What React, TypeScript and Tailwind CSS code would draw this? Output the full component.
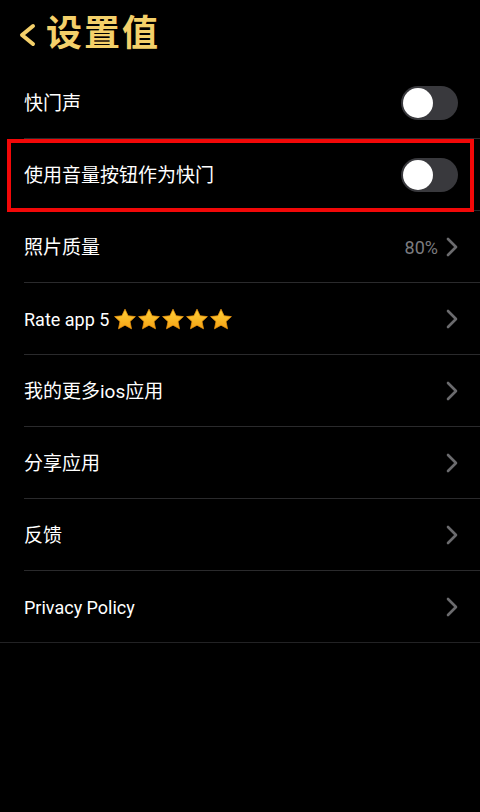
import React from "react";

const font = { fontFamily: 'Roboto, "Noto Sans CJK SC", sans-serif' };

function Chevron() {
  return (
    <svg width="12" height="20" viewBox="0 0 12 20" fill="none">
      <path d="M2 2 L10 10 L2 18" stroke="#6b6b6e" strokeWidth="2.6" strokeLinecap="round" strokeLinejoin="round" />
    </svg>
  );
}

function Toggle() {
  return (
    <div className="w-[57px] h-[34px] rounded-full bg-[#39393d] p-[2px] flex items-center">
      <div className="w-[30px] h-[30px] rounded-full bg-white" />
    </div>
  );
}

function Star() {
  return (
    <svg width="24" height="23" viewBox="0 0 24 23">
      <defs>
        <linearGradient id="sg" x1="0" y1="0" x2="0" y2="1">
          <stop offset="0" stopColor="#ffd23a" />
          <stop offset="1" stopColor="#f5a214" />
        </linearGradient>
      </defs>
      <path
        d="M12 1.2 L15.1 7.8 L22.4 8.6 L17 13.6 L18.5 20.8 L12 17.2 L5.5 20.8 L7 13.6 L1.6 8.6 L8.9 7.8 Z"
        fill="url(#sg)"
        stroke="#e8930f"
        strokeWidth="0.8"
        strokeLinejoin="round"
      />
    </svg>
  );
}

function Row({ children, right, highlight = false, last = false, cjk = true }: { children: React.ReactNode; right: React.ReactNode; highlight?: boolean; last?: boolean; cjk?: boolean }) {
  return (
    <div className="relative h-[72px]">
      <div className="h-full flex items-center justify-between pl-6 pr-[22px]">
        <div className={`${cjk ? "text-[19px] mt-[3px]" : "text-[18px]"} text-white flex items-center`}>{children}</div>
        <div className="flex items-center">{right}</div>
      </div>
      {!last && <div className="absolute left-6 right-0 bottom-0 h-px bg-[#2a2a2c]" />}
      {last && <div className="absolute left-0 right-0 bottom-0 h-px bg-[#222224]" />}
      {highlight && (
        <div className="absolute left-[7px] right-[6px] top-[0px] bottom-[-1px] border-[4px] border-[#f20808]" />
      )}
    </div>
  );
}

export default function App() {
  return (
    <div className="w-[480px] h-[812px] bg-black overflow-hidden" style={font}>
      <div className="h-[67px] flex items-center pl-[18px]">
        <svg width="19" height="24" viewBox="0 0 19 24" fill="none" className="mr-[9px] mt-[2px]">
          <path d="M15 3 L4 12 L15 21" stroke="#f4d06a" strokeWidth="4" strokeLinecap="round" strokeLinejoin="round" />
        </svg>
        <span className="text-[36px] font-bold text-[#f4d06a] leading-none tracking-[2px] mt-[1px]">设置值</span>
      </div>
      <Row right={<Toggle />}>快门声</Row>
      <Row right={<Toggle />} highlight>使用音量按钮作为快门</Row>
      <Row right={<><span className="text-[#7b7b7f] text-[18px] mr-[8px]">80%</span><Chevron /></>}>照片质量</Row>
      <Row right={<Chevron />} cjk={false}>
        <span>Rate app 5</span>
        <span className="flex items-center ml-[4px] gap-0">
          <Star /><Star /><Star /><Star /><Star />
        </span>
      </Row>
      <Row right={<Chevron />}>我的更多ios应用</Row>
      <Row right={<Chevron />}>分享应用</Row>
      <Row right={<Chevron />}>反馈</Row>
      <Row right={<Chevron />} last cjk={false}>Privacy Policy</Row>
    </div>
  );
}
